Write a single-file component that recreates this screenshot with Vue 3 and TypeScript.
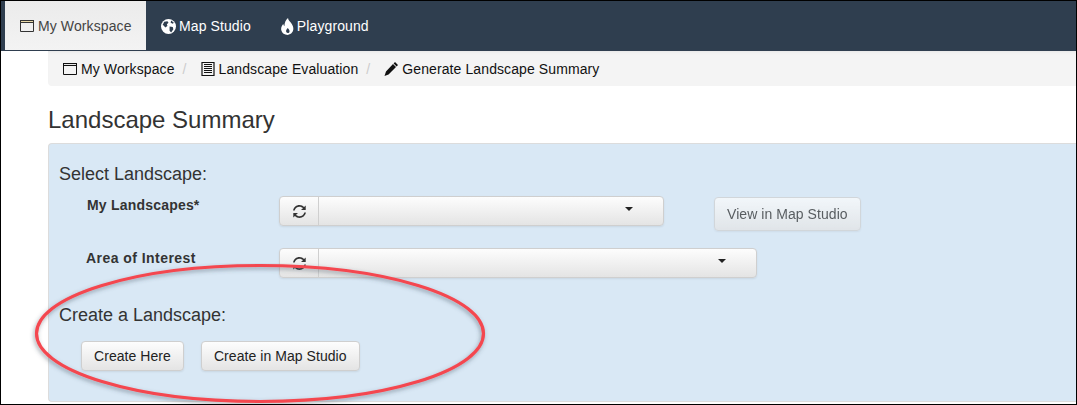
<template>
  <div class="frame">
    <nav class="topnav">
      <a class="tab active">
        <svg class="ico" viewBox="0 0 14 14"><path d="M.5 1.500h13v11H.5z" fill="none" stroke="currentColor" /><path d="M0 1h14v3H0z" fill="currentColor" /><path d="M1 2h12v1H1z" fill="#e9d9a8" /></svg>
        My Workspace
      </a>
      <a class="tab">
        <svg class="ico globe" viewBox="0 0 14 14"><circle cx="7" cy="7" r="7" fill="currentColor" /><path d="M3 2.500 6 2l1 1.500L5.500 5 6 6.500 4 8 2.500 6 1.500 5.500zM8 7l3 .5.500 2-2 3L8 11zM9.500 1.500 12 3.500l-1 1-2-1z" fill="#2f3e4f" /></svg>
        Map Studio
      </a>
      <a class="tab">
        <svg class="ico fire" viewBox="0 0 13 17"><path fill-rule="evenodd" d="M7 0c.3 2.500 2.200 3.600 3.800 5.900 1.800 2.700 2.200 6.100.2 8.600-1 1.300-2.500 2.100-4.300 2.500C3.500 16.900 1 15.200.3 12.300-.3 9.800.8 7.700 2.300 6c.1 1 .5 1.800 1.200 2.300C3.300 4.800 4.800 2 7 0zM6.800 10C5.800 11 5 12 5.100 13.300c.1 1 .8 1.700 1.700 1.700.9 0 1.600-.7 1.700-1.600.1-1.300-.9-2.200-1.700-3.400z" fill="currentColor" /></svg>
        Playground
      </a>
    </nav>

    <main class="page">
      <ol class="crumbs">
        <li v-for="(crumb, i) in crumbs" :key="crumb.label" class="crumb">
          <span v-if="i > 0" class="sep">/</span>
          <svg v-if="crumb.icon === 'window'" class="ico" viewBox="0 0 14 14"><path d="M.5 1.500h13v11H.5z" fill="none" stroke="currentColor" /><path d="M0 1h14v3H0z" fill="currentColor" /><path d="M1 2h12v1H1z" fill="#e8e8e8" /></svg>
          <svg v-else-if="crumb.icon === 'list'" class="ico" viewBox="0 0 14 14"><path d="M1 .5h12v13H1z" fill="none" stroke="currentColor" stroke-width="1.200" /><path d="M3 2.500h8M3 4.500h8M3 6.500h8M3 8.500h8M3 10.500h8" stroke="currentColor" /></svg>
          <svg v-else class="ico" viewBox="0 0 14 14"><path d="M11 0 14 3 12.600 4.400 9.600 1.400zM9 2l3 3-7.500 7.500L.5 14 2 9.500z" fill="currentColor" /></svg>
          {{ crumb.label }}
        </li>
      </ol>

      <h1 class="title">Landscape Summary</h1>

      <section class="panel">
        <h2 class="heading">Select Landscape:</h2>

        <div class="field first">
          <label class="field-label">My Landscapes*</label>
          <div class="picker narrow">
            <button class="refresh">
              <svg class="refresh-ico" viewBox="0 0 14 14"><path d="M1 6C1.600 3 4 1 7 1c1.700 0 3.200.7 4.300 1.800L12.800 1.300v4.400H8.400L10.200 3.900C9.300 3 8.200 2.500 7 2.500 4.800 2.500 3 3.900 2.500 6zM13 8c-.6 3-3 5-6 5-1.700 0-3.200-.7-4.300-1.800L1.200 12.700V8.300h4.400L3.800 10.100C4.700 11 5.800 11.500 7 11.500c2.200 0 4-1.400 4.500-3.500z" fill="currentColor" /></svg>
            </button>
            <div class="select"><span class="caret"></span></div>
          </div>
          <button class="btn disabled">View in Map Studio</button>
        </div>

        <div class="field second">
          <label class="field-label area">Area of Interest</label>
          <div class="picker wide">
            <button class="refresh">
              <svg class="refresh-ico" viewBox="0 0 14 14"><path d="M1 6C1.600 3 4 1 7 1c1.700 0 3.200.7 4.300 1.800L12.800 1.300v4.400H8.400L10.200 3.900C9.300 3 8.200 2.500 7 2.500 4.800 2.500 3 3.900 2.500 6zM13 8c-.6 3-3 5-6 5-1.700 0-3.200-.7-4.300-1.800L1.200 12.700V8.300h4.400L3.800 10.100C4.700 11 5.800 11.500 7 11.500c2.200 0 4-1.400 4.500-3.500z" fill="currentColor" /></svg>
            </button>
            <div class="select"><span class="caret"></span></div>
          </div>
        </div>

        <h2 class="heading create">Create a Landscape:</h2>
        <div class="actions">
          <button class="btn">Create Here</button>
          <button class="btn">Create in Map Studio</button>
        </div>
      </section>
    </main>

    <!-- hand drawn annotation sitting on top of the screenshot -->
    <svg class="annotation" width="470" height="150" viewBox="0 0 470 150">
      <defs>
        <filter id="ring-shadow" x="-5%" y="-10%" width="110%" height="125%">
          <feDropShadow dx="-1" dy="2" stdDeviation="2" flood-color="#3a4a5a" flood-opacity="0.5" />
        </filter>
      </defs>
      <ellipse cx="235" cy="70.500" rx="223.500" ry="68" fill="none" stroke="#f4474f" stroke-width="3.200" filter="url(#ring-shadow)" />
    </svg>
  </div>
</template>

<script setup lang="ts">
const crumbs = [
  { label: 'My Workspace', icon: 'window' },
  { label: 'Landscape Evaluation', icon: 'list' },
  { label: 'Generate Landscape Summary', icon: 'pencil' },
]
</script>

<style>
html,
body {
  margin: 0;
  background: #fff;
}
</style>

<style scoped>
.frame {
  position: relative;
  box-sizing: border-box;
  width: 1077px;
  height: 405px;
  overflow: hidden;
  border: 1px solid #000;
  background: #fff;
  font-family: "Liberation Sans", Arial, sans-serif;
  font-size: 14px;
  color: #222;
}

.topnav {
  display: flex;
  height: 50px;
  padding-left: 4px;
  background: #2f3e4f;
}

.tab {
  display: flex;
  align-items: center;
  gap: 3px;
  padding: 0 15px;
  color: #fff;
  line-height: 20px;
  letter-spacing: 0.1px;
}

.tab.active {
  height: 49px;
  padding: 0 14.500px 0 15px;
  gap: 4px;
  background: linear-gradient(to bottom, #ebebeb, #f3f3f3);
  color: #444;
}

.tab.active .ico {
  color: #333;
}

.ico {
  width: 14px;
  height: 14px;
  flex-shrink: 0;
}

.ico.globe {
  width: 15px;
  height: 15px;
}

.ico.fire {
  width: 13px;
  height: 17px;
}

.page {
  padding-left: 47px;
}

.crumbs {
  display: flex;
  align-items: center;
  height: 35px;
  margin: 0;
  padding: 0 0 0 15px;
  list-style: none;
  background: #f4f4f4;
  border-bottom-left-radius: 4px;
  box-shadow: inset 0 3px 3px -2px #e6e6e6;
  color: #111;
  letter-spacing: 0.1px;
}

.crumb {
  display: flex;
  align-items: center;
  gap: 4px;
}

.sep {
  margin: 0 10px 0 8px;
  color: #ccc;
}

.title {
  margin: 20px 0 0;
  font-size: 24px;
  font-weight: 400;
  line-height: 28px;
  color: #333;
}

.panel {
  box-sizing: border-box;
  height: 259px;
  margin-top: 9px;
  padding: 20px 0 0 10px;
  background: #d9e8f5;
  border: 1px solid #dcdcdc;
  border-right: 0;
  border-radius: 4px 0 0 4px;
}

.heading {
  margin: 0;
  font-size: 18px;
  font-weight: 400;
  line-height: 20px;
  color: #333;
}

.heading.create {
  margin-top: 27px;
}

.field {
  display: flex;
  align-items: flex-start;
}

.field.first {
  height: 42px;
  margin-top: 12px;
}

.field.second {
  height: 30px;
  margin-top: 10px;
}

.field-label {
  width: 220px;
  padding: 1px 0 0 28px;
  box-sizing: border-box;
  font-weight: 700;
  line-height: 16px;
  color: #333;
  letter-spacing: 0.2px;
}

.field-label.area {
  padding: 2px 0 0 27px;
  letter-spacing: 0.45px;
}

.picker {
  display: flex;
  height: 30px;
  box-sizing: border-box;
  border: 1px solid #cfcfcf;
  border-radius: 4px;
  background: linear-gradient(to bottom, #fdfdfd, #e4e4e4);
  box-shadow: 0 1px 2px rgba(0, 0, 0, 0.08);
}

.picker.narrow {
  width: 385px;
}

.picker.wide {
  width: 478px;
}

.refresh {
  display: flex;
  align-items: center;
  justify-content: center;
  width: 39px;
  padding: 0;
  border: 0;
  border-right: 1px solid #cfcfcf;
  background: transparent;
  color: #333;
}

.refresh-ico {
  width: 15px;
  height: 15px;
}

.select {
  display: flex;
  flex: 1;
  justify-content: flex-end;
  padding: 10px 30px 0 0;
}

.caret {
  width: 0;
  height: 0;
  border-top: 4px solid #222;
  border-left: 4px solid transparent;
  border-right: 4px solid transparent;
}

.btn {
  box-sizing: border-box;
  height: 30px;
  padding: 0 12px;
  border: 1px solid #cfcfcf;
  border-radius: 4px;
  background: linear-gradient(to bottom, #fdfdfd, #e4e4e4);
  box-shadow: 0 1px 2px rgba(0, 0, 0, 0.08);
  font-family: inherit;
  font-size: 14px;
  letter-spacing: 0.06px;
  color: #222;
}

.btn.disabled {
  height: 34px;
  margin: 1px 0 0 50px;
  opacity: 0.7;
  color: #222;
}

.actions {
  display: flex;
  gap: 17px;
  margin-top: 16px;
  margin-left: 22px;
}

.annotation {
  position: absolute;
  left: 24px;
  top: 262px;
  pointer-events: none;
}
</style>
